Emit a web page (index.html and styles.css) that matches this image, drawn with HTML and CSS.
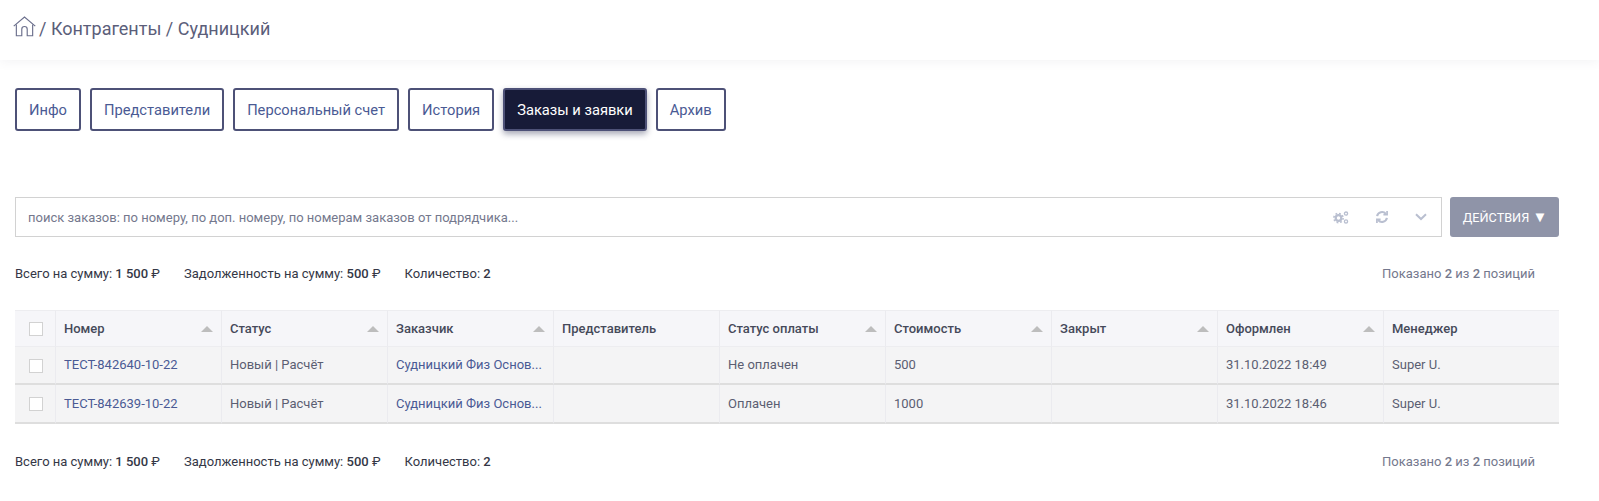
FILE: index.html
```html
<!DOCTYPE html>
<html lang="ru">
<head>
<meta charset="utf-8">
<title>Судницкий</title>
<link rel="stylesheet" href="styles.css">
</head>
<body>
<header class="topbar">
  <svg class="home" viewBox="0 0 22 20" width="23" height="21" fill="none" stroke="#6b6f8c" stroke-width="1.1"><path d="M0.7 9.6 11 0.9l10.3 8.7"/><path d="M3.2 8v10.8h5.2v-6.2a2.6 2.6 0 0 1 5.2 0v6.2h5.2V8"/></svg>
  <span class="crumbs">/ Контрагенты / Судницкий</span>
</header>
<main class="content">
  <nav class="tabs">
    <a class="tab">Инфо</a>
    <a class="tab">Представители</a>
    <a class="tab">Персональный счет</a>
    <a class="tab">История</a>
    <a class="tab tab-active">Заказы и заявки</a>
    <a class="tab">Архив</a>
  </nav>
  <section class="search-row">
    <div class="search">
      <span class="placeholder">поиск заказов: по номеру, по доп. номеру, по номерам заказов от подрядчика...</span>
      <span class="search-icons">
        <svg viewBox="0 0 16 13" width="16" height="13" fill="none" stroke="#b9bfd0"><circle cx="5.5" cy="7" r="2.8" stroke-width="2.2"/><circle cx="5.5" cy="7" r="4.6" stroke-width="1.6" stroke-dasharray="1.8 1.8"/><circle cx="13" cy="2.6" r="1.6" stroke-width="1.3"/><circle cx="13" cy="10.4" r="1.6" stroke-width="1.3"/></svg>
        <svg viewBox="0 0 16 16" width="14" height="14" fill="none" stroke="#b9bfd0" stroke-width="2.4"><path d="M2.4 7a5.7 5.7 0 0 1 10-2.6"/><path d="M13.6 9a5.7 5.7 0 0 1-10 2.6"/><path d="M13.8 1.2v4.2H9.6" stroke-width="2"/><path d="M2.2 14.8v-4.2h4.2" stroke-width="2"/></svg>
        <svg viewBox="0 0 12 8" width="12" height="8" fill="none" stroke="#b9bfd0" stroke-width="2"><path d="M1 1.2 6 6l5-4.8"/></svg>
      </span>
    </div>
    <button class="actions">ДЕЙСТВИЯ <span class="caret">▼</span></button>
  </section>
  <div class="summary summary-top">
    <div class="totals">
      <span>Всего на сумму: <b>1 500</b> <i class="rub">₽</i></span>
      <span>Задолженность на сумму: <b>500</b> <i class="rub">₽</i></span>
      <span>Количество: <b>2</b></span>
    </div>
    <div class="shown">Показано <b>2</b> из <b>2</b> позиций</div>
  </div>
  <table class="grid">
    <thead>
      <tr>
        <th class="c-check"><span class="box"></span></th>
        <th class="sort">Номер</th>
        <th class="sort">Статус</th>
        <th class="sort">Заказчик</th>
        <th>Представитель</th>
        <th class="sort">Статус оплаты</th>
        <th class="sort">Стоимость</th>
        <th class="sort">Закрыт</th>
        <th class="sort">Оформлен</th>
        <th class="c-last">Менеджер</th>
      </tr>
    </thead>
    <tbody>
      <tr>
        <td class="c-check"><span class="box"></span></td>
        <td><a class="link">ТЕСТ-842640-10-22</a></td>
        <td>Новый | Расчёт</td>
        <td><a class="link">Судницкий Физ Основ...</a></td>
        <td></td>
        <td>Не оплачен</td>
        <td>500</td>
        <td></td>
        <td>31.10.2022 18:49</td>
        <td>Super U.</td>
      </tr>
      <tr>
        <td class="c-check"><span class="box"></span></td>
        <td><a class="link">ТЕСТ-842639-10-22</a></td>
        <td>Новый | Расчёт</td>
        <td><a class="link">Судницкий Физ Основ...</a></td>
        <td></td>
        <td>Оплачен</td>
        <td>1000</td>
        <td></td>
        <td>31.10.2022 18:46</td>
        <td>Super U.</td>
      </tr>
    </tbody>
  </table>
  <div class="summary summary-bottom">
    <div class="totals">
      <span>Всего на сумму: <b>1 500</b> <i class="rub">₽</i></span>
      <span>Задолженность на сумму: <b>500</b> <i class="rub">₽</i></span>
      <span>Количество: <b>2</b></span>
    </div>
    <div class="shown">Показано <b>2</b> из <b>2</b> позиций</div>
  </div>
</main>
</body>
</html>
```
FILE: styles.css
```css
* { box-sizing: border-box; }
html, body { margin: 0; height: 501px; overflow: hidden; background: #fff; }
body { font-family: Roboto, "Noto Sans", sans-serif; font-size: 13px; color: #3f4254; }
.topbar {
  height: 60px;
  display: flex;
  align-items: center;
  gap: 3px;
  padding: 0 0 4px 13px;
  background: #fff;
  box-shadow: 0 2px 10px rgba(80, 90, 110, .07);
}
.home { margin-top: -3px; }
.crumbs { font-size: 18px; color: #5b5e7a; }
.content { padding: 28px 40px 0 15px; }
.tabs { display: flex; gap: 9px; }
.tab {
  height: 43px;
  padding: 0 12px;
  display: flex;
  align-items: center;
  border: 2px solid #4d5177;
  border-radius: 3px;
  font-size: 14.7px;
  color: #4a5a94;
  background: #fff;
}
.tab-active { background: #171b38; color: #fff; box-shadow: 0 3px 6px rgba(30, 35, 70, .4); }
.search-row { display: flex; gap: 8px; margin-top: 66px; height: 40px; }
.search {
  flex: 1;
  display: flex;
  align-items: center;
  justify-content: space-between;
  border: 1px solid #d2d2d2;
  padding: 0 14px 0 12px;
}
.placeholder { color: #74788d; font-size: 13px; }
.search-icons { display: flex; align-items: center; gap: 26px; }
.actions {
  width: 109px;
  border: 0;
  border-radius: 3px;
  background: #8f94a8;
  color: #fff;
  font: 12.7px Roboto, sans-serif;
  padding: 0 0 0 1px;
}
.caret { font-size: 15px; line-height: 1; }
.summary { display: flex; justify-content: space-between; align-items: center; height: 16px; padding-right: 24px; }
.summary-top { margin-top: 28px; }
.summary-bottom { margin-top: 29px; }
.totals { display: flex; gap: 24px; color: #343746; }
.totals b { font-weight: 500; }
.rub { font-style: normal; font-weight: 400; }
.shown { color: #74788d; }
.shown b { font-weight: 500; }
.grid {
  width: 1544px;
  margin-top: 29px;
  table-layout: fixed;
  border-collapse: separate;
  border-spacing: 0;
}
.grid th, .grid td {
  width: 166px;
  padding: 0 8px;
  text-align: left;
  border-right: 1px solid #ebebef;
  white-space: nowrap;
}
.grid th:last-child, .grid td:last-child { border-right: 0; }
.grid .c-check { width: 41px; padding: 0 0 0 2px; text-align: center; }
.grid .c-last { width: 175px; }
.grid th {
  height: 37px;
  background: #f6f6f9;
  border-top: 1px solid #ededf0;
  border-bottom: 1px solid #ededf0;
  font-weight: 500;
  color: #464a5a;
}
.sort { position: relative; }
.sort::after {
  content: "";
  position: absolute;
  right: 8px;
  top: 15px;
  border-left: 6px solid transparent;
  border-right: 6px solid transparent;
  border-bottom: 6px solid #bdbdbd;
}
.grid td {
  height: 38px;
  padding-bottom: 1px;
  background: #f4f4f5;
  border-bottom: 2px solid #dedede;
  color: #5b5e72;
}
.grid tbody tr:last-child td { height: 39px; }
.box {
  display: inline-block;
  width: 14px;
  height: 14px;
  background: #fff;
  border: 1px solid #d2d2d2;
  vertical-align: middle;
}
.link { color: #4a5a94; }
```
